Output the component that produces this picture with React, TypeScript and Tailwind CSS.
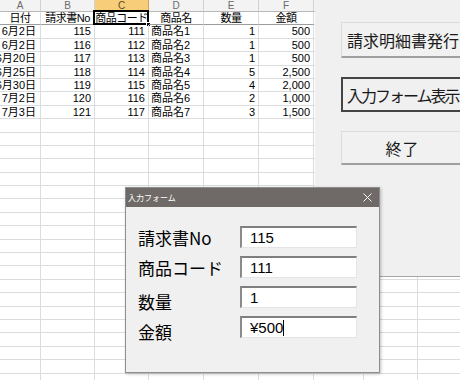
import React from 'react';

const colW = [
  'w-[41px]',
  'w-[54px]',
  'w-[54px]',
  'w-[55px]',
  'w-[55px]',
  'w-[55px]',
  'w-[50px]',
  'w-[54px]',
  'w-[54px]',
];
const letters = ['A', 'B', 'C', 'D', 'E', 'F', 'G', 'H', 'I'];
const align = [
  'justify-end pr-[4px]',
  'justify-end pr-[3px]',
  'justify-end pr-[3px]',
  'justify-start pl-[2px]',
  'justify-end pr-[3px]',
  'justify-end pr-[3px]',
  'justify-start',
  'justify-start',
  'justify-start',
];

const headerRow = ['日付', '請求書No', '商品コード', '商品名', '数量', '金額'];
const data = [
  ['6月2日', '115', '111', '商品名1', '1', '500'],
  ['6月2日', '116', '112', '商品名2', '1', '500'],
  ['6月20日', '117', '113', '商品名3', '1', '500'],
  ['6月25日', '118', '114', '商品名4', '5', '2,500'],
  ['6月30日', '119', '115', '商品名5', '4', '2,000'],
  ['7月2日', '120', '116', '商品名6', '2', '1,000'],
  ['7月3日', '121', '117', '商品名7', '3', '1,500'],
];

const TOTAL_ROWS = 28;

function ColumnHeader() {
  return (
    <div className="flex h-[12px]">
      {letters.map((l, i) => (
        <div
          key={l}
          className={`${colW[i]} shrink-0 h-[12px] flex items-center justify-center text-[10px] leading-none border-r border-b ${
            i === 2
              ? 'bg-[#f7cd79] text-[#5a4a2a] border-r-[#c9a45a] border-b-[#c9a45a]'
              : 'bg-[#f3f3f3] text-[#6a6a6a] border-r-[#d2d2d2] border-b-[#b8b8b8]'
          }`}
        >
          {l}
        </div>
      ))}
    </div>
  );
}

function Row({ idx }: { idx: number }) {
  const isHead = idx === 0;
  const values: string[] = isHead ? headerRow : idx <= data.length ? data[idx - 1] : [];
  return (
    <div className="flex h-[13.4px]">
      {letters.map((l, i) => {
        const v = values[i] ?? '';
        const darkBottom = isHead && i < 6;
        return (
          <div
            key={l}
            className={`${colW[i]} relative shrink-0 h-[13.4px] border-r border-b border-r-[#dadcdd] ${
              darkBottom ? 'border-b-[#9c9c9c]' : 'border-b-[#dadcdd]'
            } text-[11px] leading-[13px] text-black`}
          >
            <div
              className={`h-full flex overflow-hidden whitespace-nowrap ${
                isHead ? 'justify-center tracking-[-0.5px]' : align[i]
              }`}
            >
              <span className="shrink-0">{v}</span>
            </div>
            {isHead && i === 2 && (
              <>
                <div className="absolute left-[-2px] top-[-2px] right-[-1px] bottom-[-1px] border-2 border-black" />
                <div className="absolute right-[-3px] bottom-[-3px] w-[5px] h-[5px] bg-black border border-white" />
              </>
            )}
          </div>
        );
      })}
    </div>
  );
}

function FormRow({
  label,
  value,
  labelPad,
  caret,
}: {
  label: string;
  value: string;
  labelPad?: string;
  caret?: boolean;
}) {
  return (
    <div className="flex items-center h-[22px]">
      <div className={`w-[102px] shrink-0 text-[17px] leading-none text-black whitespace-nowrap ${labelPad ?? ''}`}>
        {label}
      </div>
      <div className="w-[117px] h-[22px] shrink-0 bg-white border-t-2 border-l-2 border-r border-b border-t-[#7f7f7f] border-l-[#8a8a8a] border-r-[#e4e4e4] border-b-[#e4e4e4] flex items-center pl-[8px] font-['Liberation_Sans','Noto_Sans_CJK_JP',sans-serif] text-[15px] leading-none text-black">
        <span>{value}</span>
        {caret && <span className="inline-block w-px h-[16px] bg-black" />}
      </div>
    </div>
  );
}

export default function App() {
  return (
    <div className="relative w-[460px] h-[380px] overflow-hidden bg-white font-['Liberation_Sans','Noto_Sans_CJK_JP',sans-serif]">
      {/* Sheet */}
      <div className="flex flex-col">
        <ColumnHeader />
        {Array.from({ length: TOTAL_ROWS }).map((_, i) => (
          <Row key={i} idx={i} />
        ))}
      </div>

      {/* Button panel */}
      <div className="absolute left-[315px] top-0 w-[145px] h-[277px] bg-[#f0f0f0] border-b border-b-[#a6a6a6] font-['Noto_Sans_CJK_JP',sans-serif]">
        <div className="flex flex-col pl-[26px] pt-[22px] gap-[19px]">
          <button className="w-[122px] h-[36px] shrink-0 bg-[#f1f1f1] border-t border-l border-b-2 border-t-[#dcdcdc] border-l-[#dcdcdc] border-b-[#9f9f9f] text-left pl-[5px] text-[16px] leading-none text-[#1a1a1a] whitespace-nowrap">
            請求明細書発行
          </button>
          <button className="w-[122px] h-[35px] shrink-0 bg-[#f0f0f0] border-2 border-[#454545] text-left pl-[4px] text-[16px] tracking-[-2px] leading-none text-[#1a1a1a] whitespace-nowrap overflow-hidden">
            入力フォーム表示
          </button>
          <button className="w-[122px] h-[34px] shrink-0 bg-[#f1f1f1] border-t border-l border-b-2 border-t-[#dcdcdc] border-l-[#dcdcdc] border-b-[#9f9f9f] text-center text-[16px] tracking-[1px] leading-none text-[#1a1a1a] whitespace-nowrap">
            終了
          </button>
        </div>
      </div>

      {/* Dialog */}
      <div className="absolute left-[125px] top-[187px] w-[255px] h-[186px] bg-[#f0f0f0] border border-[#8e8e8e] shadow-[1px_1px_3px_rgba(0,0,0,0.25)] flex flex-col font-['Noto_Sans_CJK_JP',sans-serif]">
        <div className="h-[19px] shrink-0 bg-[#6f6a68] flex items-center justify-between pl-[2px] pr-[7px]">
          <span className="text-[8px] leading-none text-white">入力フォーム</span>
          <svg width="9" height="9" viewBox="0 0 9 9">
            <path d="M0.5 0.5 L8.5 8.5 M8.5 0.5 L0.5 8.5" stroke="#ffffff" strokeWidth="1" fill="none" />
          </svg>
        </div>
        <div className="flex flex-col gap-[8px] pt-[19px] pl-[12px]">
          <FormRow label="請求書No" value="115" />
          <FormRow label="商品コード" value="111" />
          <FormRow label="数量" value="1" labelPad="pt-[8px]" />
          <FormRow label="金額" value="¥500" labelPad="pt-[8px]" caret />
        </div>
      </div>
    </div>
  );
}
